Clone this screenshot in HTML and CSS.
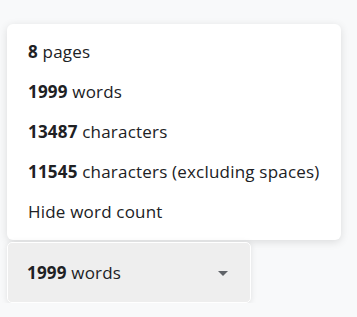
FILE: index.html
```html
<!DOCTYPE html>
<html lang="en">
<head>
    <meta charset="UTF-8">
    <meta name="viewport" content="width=device-width, initial-scale=1.0">
    <title>Word count</title>
    <link rel="stylesheet" href="styles.css">
</head>
<body>

    <div class="menu">
        <div class="item"><b>8</b> pages</div>
        <div class="item"><b>1999</b> words</div>
        <div class="item"><b>13487</b> characters</div>
        <div class="item"><b>11545</b> characters (excluding spaces)</div>
        <div class="item">Hide word count</div>
    </div>

    <div class="counter">
        <span><b>1999</b> words</span>
        <svg class="arrow" width="10" height="5" viewBox="0 0 10 5"><path d="M0 0h10L5 5z" fill="#5f6368"/></svg>
    </div>

</body>
</html>
```

FILE: styles.css
```css
body {
    font-family: 'Open Sans', 'Liberation Sans', sans-serif;
    background: #f8f9fa;
    color: #202124;
    margin: 0;
    padding: 24px 0 0 7px;
    letter-spacing: 0.2px;
}
.menu {
    width: 334px;
    background: white;
    border-radius: 6px;
    padding: 8px 0;
    box-shadow: 0px 2px 8px rgba(0, 0, 0, 0.12);
}
.item {
    height: 40px;
    line-height: 40px;
    padding-left: 21px;
    font-size: 17px;
}
b {
    font-weight: 700;
}
.counter {
    margin-top: 2px;
    background: #eeeeee;
    border: 1px solid white;
    border-radius: 5px;
    box-shadow: 0px 1px 6px rgba(0, 0, 0, 0.1);
    display: flex;
    align-items: center;
    justify-content: space-between;
    padding: 0 22px 0 19px;
    box-sizing: border-box;
    width: 244px;
    height: 61px;
    font-size: 17px;
}
.arrow {
    margin-top: 1px;
}
```
